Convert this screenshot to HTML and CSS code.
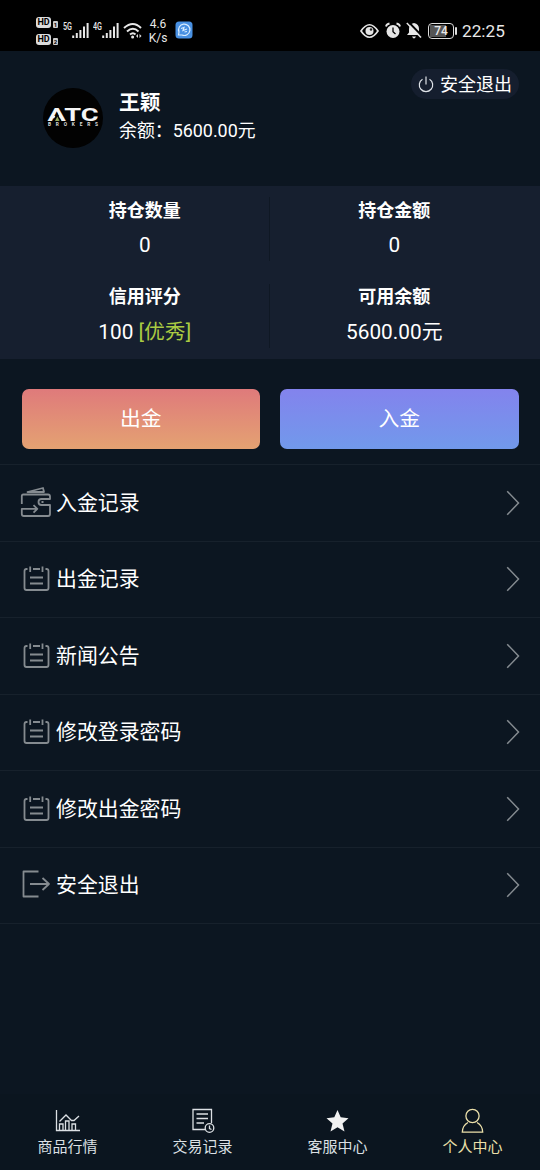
FILE: index.html
```html
<!DOCTYPE html>
<html lang="zh-CN">
<head>
<meta charset="utf-8">
<title>个人中心</title>
<link rel="stylesheet" href="styles.css">
</head>
<body>
<svg class="defs" width="0" height="0">
  <symbol id="note" viewBox="0 0 30 30"><path d="M6.500 5H5.500Q3.500 5 3.500 7V24Q3.500 26 5.500 26H25.500Q27.500 26 27.500 24V7Q27.500 5 25.500 5H24.500M12 5H19M9.200 2.500V8M21.500 2.500V8M9 13.500H22M9 19.500H22"/></symbol>
  <symbol id="chevron" viewBox="0 0 14 26"><path d="M1.200 1.200L12.500 13L1.200 24.800"/></symbol>
  <symbol id="signal" viewBox="0 0 17 16"><path d="M1.200 13.500V16M4.800 11V16M8.400 8V16M12 4.500V16M15.600 1V16"/></symbol>
</svg>
<div class="screen">
  <div class="status">
    <div class="sims">
      <div class="sim"><b>HD</b><i>1</i></div>
      <div class="sim"><b>HD</b><i>2</i></div>
    </div>
    <div class="cell"><small>5G</small><svg class="signal"><use href="#signal"/></svg></div>
    <div class="cell cell-4g"><small>4G</small><svg class="signal"><use href="#signal"/></svg></div>
    <svg class="wifi" viewBox="0 0 20 17"><path d="M1 6Q10-2 18 6M4 9.500Q10 4 15.500 9.500M7 12.500Q10 10 12.500 12.500" fill="none" stroke="#e8e8e8" stroke-width="2"/><circle cx="9.600" cy="15" r="1.500" fill="#e8e8e8"/><path d="M15 12L13 14L15 16ZM16.500 12L18.500 14L16.500 16Z" fill="#ddd"/></svg>
    <div class="speed"><span>4.6</span><span>K/s</span></div>
    <svg class="app" viewBox="0 0 18 18"><rect x=".5" y=".5" width="17" height="17" rx="3.500" fill="#4890e2"/><path d="M3.500 14L4 11A5.700 5.700 0 1 1 7 14Z" fill="none" stroke="#d9edff" stroke-width="1.200"/><path d="M6 7.500L9 6.500L8 9.500L12 8M9.500 11L12 10.500" fill="none" stroke="#d9edff" stroke-width="1.200"/></svg>
    <svg class="eye" viewBox="0 0 19 16"><path d="M1 8Q9.500-4.500 18 8Q9.500 20.500 1 8Z" fill="none" stroke="#e6e6e6" stroke-width="1.700"/><circle cx="9.500" cy="8" r="4" fill="#e6e6e6"/><circle cx="11" cy="6.500" r="1.200" fill="#222"/></svg>
    <svg class="alarm" viewBox="0 0 16 17"><circle cx="8" cy="9.500" r="6.500" fill="#e6e6e6"/><path d="M1 4.500Q1.500 2 4.500 1.500M15 4.500Q14.500 2 11.500 1.500" fill="none" stroke="#e6e6e6" stroke-width="1.800"/><path d="M8 5.500V9.800L10.500 12" fill="none" stroke="#000" stroke-width="1.300"/></svg>
    <svg class="mute" viewBox="0 0 16 17"><path d="M8 1Q13 2 13 7V10.500L15 13H1L3 10.500V7Q3 2 8 1ZM6 14.500H10Q9 16.500 8 16.500T6 14.500Z" fill="#e6e6e6"/><path d="M2.500 0L16 14" stroke="#000" stroke-width="2"/><path d="M.8 1L15 15.500" stroke="#e6e6e6" stroke-width="1.500"/></svg>
    <div class="battery"><span>74</span></div>
    <div class="clock">22:25</div>
  </div>
  <header class="profile">
    <svg class="avatar" viewBox="0 0 60 60"><circle cx="30" cy="30" r="30" fill="#020202"/><text class="brand" x="4.500" y="32.800" textLength="51" lengthAdjust="spacingAndGlyphs">ATC</text><path d="M9.500 34L14 24.500L18.700 34Z" fill="#020202"/><path d="M12 33L14.300 28.500L16.600 33Z" fill="#95a958"/><text class="brand-sub" x="5" y="38.200" textLength="50">BROKERS</text></svg>
    <div class="who"><div class="name">王颖</div><div class="balance">余额：5600.00元</div></div>
    <div class="logout"><svg class="power" viewBox="0 0 16 17"><path d="M4.500 3.200A6.700 6.700 0 1 0 11.500 3.200M8 .5V8.500" fill="none" stroke="#dfe3e8" stroke-width="1.200"/></svg><span>安全退出</span></div>
  </header>
  <section class="stats">
    <div class="stat"><strong>持仓数量</strong><span>0</span></div>
    <div class="stat"><strong>持仓金额</strong><span>0</span></div>
    <div class="stat"><strong>信用评分</strong><span>100 <em>[优秀]</em></span></div>
    <div class="stat"><strong>可用余额</strong><span>5600.00元</span></div>
  </section>
  <div class="actions"><div class="btn out">出金</div><div class="btn in">入金</div></div>
  <nav class="menu">
    <div class="row"><svg class="icon" viewBox="0 0 30 30"><path d="M.8 16V8Q.8 6.500 2.300 6.500H27Q29 6.500 29 8.500V11H20.500A3 3 0 0 0 20.500 17H29V26Q29 28 27 28H2.800Q.8 28 .8 26V20.800H16M12.500 17.200L16.300 20.800L12.500 24.600M6.500 4L22 0L23 4ZM20.500 14H22.500"/></svg><span>入金记录</span><svg class="chevron"><use href="#chevron"/></svg></div>
    <div class="row"><svg class="icon"><use href="#note"/></svg><span>出金记录</span><svg class="chevron"><use href="#chevron"/></svg></div>
    <div class="row"><svg class="icon"><use href="#note"/></svg><span>新闻公告</span><svg class="chevron"><use href="#chevron"/></svg></div>
    <div class="row"><svg class="icon"><use href="#note"/></svg><span>修改登录密码</span><svg class="chevron"><use href="#chevron"/></svg></div>
    <div class="row"><svg class="icon"><use href="#note"/></svg><span>修改出金密码</span><svg class="chevron"><use href="#chevron"/></svg></div>
    <div class="row"><svg class="icon" viewBox="0 0 30 30"><path d="M17.500 1.500H2.500V26.500H17.500M9 14H28M21.500 8L28 14L21.500 20"/></svg><span>安全退出</span><svg class="chevron"><use href="#chevron"/></svg></div>
  </nav>
  <footer class="tabs">
    <div class="tab"><svg viewBox="0 0 26 26"><path d="M1.500 2V22.500H25M4.500 22V16H8V22M10.500 22V13H14V22M17 22V16H20.500V22M4.500 13.500L11 7L16.500 12.500H19L24 8"/></svg><span>商品行情</span></div>
    <div class="tab"><svg viewBox="0 0 26 26"><path d="M15 21.500H3V1.500H21.500V15M6.500 6H18M6.500 10.500H18M6.500 15H14"/><circle cx="19.500" cy="20" r="4.300"/><path d="M19.500 17.500V20.500L21.500 21.500"/></svg><span>交易记录</span></div>
    <div class="tab"><svg viewBox="0 0 26 26"><path class="star" d="M12.500 2L15.700 9.300L23.500 10.200L17.500 15.400L19.500 23.500L12.500 19.300L5.500 23.500L7.500 15.400L1.500 10.200L9.300 9.300Z"/></svg><span>客服中心</span></div>
    <div class="tab active"><svg viewBox="0 0 26 26"><circle cx="12.500" cy="8" r="6.600"/><path d="M8 14.500Q2.500 17.500 2.300 24.200H22.700Q22.500 17.500 17 14.500"/></svg><span>个人中心</span></div>
  </footer>
</div>
</body>
</html>
```
FILE: styles.css
```css
* { box-sizing: border-box; }
body { margin: 0; background: #0c1621; color: #fff; font-family: Roboto, "Noto Sans CJK SC", sans-serif; }
.defs { display: block; }
svg { flex: none; display: block; }
.screen { width: 540px; height: 1170px; display: flex; flex-direction: column; overflow: hidden; }
.status { height: 51px; flex: none; background: #000; display: flex; align-items: flex-start; color: #e8e8e8; padding-left: 36px; }
.sims { width: 27px; padding-top: 17px; display: flex; flex-direction: column; gap: 6px; }
.sim { display: flex; align-items: flex-end; gap: 2px; height: 11px; }
.sim b { width: 15px; height: 11px; border-radius: 3px; background: #ddd; color: #000; font-size: 9px; line-height: 11px; text-align: center; }
.sim i { width: 5px; height: 7px; border-radius: 1px; background: #ccc; color: #000; font: bold 6px/7px Roboto, sans-serif; text-align: center; }
.cell { width: 30px; padding-top: 22px; display: flex; align-items: flex-start; }
.cell small { width: 9px; font-size: 10px; line-height: 10px; transform: scaleX(.72); transform-origin: left; font-weight: 500; }
.signal { width: 17px; height: 16px; stroke: #e8e8e8; stroke-width: 2; }
.cell-4g { width: 31px; }
.wifi { width: 20px; height: 17px; margin: 22px 0 0 -1px; }
.speed { width: 30px; margin: 17px 3px 0 0; display: flex; flex-direction: column; align-items: center; font-size: 12px; line-height: 14px; }
.app { width: 18px; height: 18px; margin: 21px 167px 0 -1px; }
.eye { width: 19px; height: 16px; margin: 23px 6px 0 0; }
.alarm { width: 16px; height: 17px; margin: 22px 5px 0 0; }
.mute { width: 16px; height: 17px; margin: 22px 6px 0 0; }
.battery { width: 26px; height: 16px; margin: 23px 0 0 0; border: 1.5px solid #ddd; border-radius: 4px; padding: 1px; position: relative; }
.battery::after { content: ""; position: absolute; right: -4px; top: 3px; width: 2px; height: 8px; background: #ddd; border-radius: 1px; }
.battery span { display: block; height: 12px; background: linear-gradient(90deg, #555 74%, #000 74%); font-size: 12px; line-height: 13px; text-align: center; font-weight: 500; }
.clock { margin: 20px 0 0 8px; font-size: 17.200px; line-height: 22px; }
.profile { height: 135px; flex: none; padding: 37px 21px 0 43px; display: flex; align-items: flex-start; }
.avatar { width: 60px; height: 60px; margin-right: 16px; }
.who { padding-top: 1px; }
.brand { font: 700 17.500px Roboto, sans-serif; fill: #f5f5f5; }
.brand-sub { font: bold 4.800px Roboto, sans-serif; fill: #ddd; }
.name { font-size: 20.800px; line-height: 28px; font-weight: 700; }
.balance { font-size: 17.900px; line-height: 28px; }
.logout { width: 108px; height: 30px; margin: -19px 0 0 auto; border-radius: 15px; background: #151e2e; display: flex; align-items: center; padding-left: 7px; gap: 6px; font-size: 18px; line-height: 30px; white-space: nowrap; }
.logout span { padding-top: 1px; }
.power { width: 16px; height: 17px; }
.stats { height: 172.500px; flex: none; background: #161f2f; display: grid; grid-template-columns: 269.500px 1fr; grid-template-rows: 86.500px 86px; }
.stat { display: flex; flex-direction: column; align-items: center; padding: 9px 0 0 20px; position: relative; }
.stat:nth-child(even) { padding-left: 0; padding-right: 21px; }
.stat:nth-child(odd)::after { content: ""; position: absolute; right: 0; top: 11px; height: 64px; width: 1px; background: #0f1824; }
.stat strong { font-size: 18px; line-height: 30px; font-weight: 700; }
.stat:nth-child(-n+2) strong { padding-top: 1px; margin-bottom: -1px; }
.stat span { font-size: 20.800px; line-height: 30px; margin-top: 5px; }
.stat em { font-style: normal; color: #aacb42; }
.actions { flex: none; padding: 30.500px 21.500px 15px; display: flex; gap: 20px; }
.btn { flex: 1; height: 60px; border-radius: 7px; font-size: 20.800px; line-height: 60px; text-align: center; }
.out { background: linear-gradient(#df7a7b, #e4a272); }
.in { background: linear-gradient(#8383ed, #7199eb); }
.menu { flex: none; border-top: 1px solid #17212c; }
.row { height: 76.500px; border-bottom: 1px solid #17212c; padding: 0 20px 0 21px; display: flex; align-items: center; font-size: 20.900px; line-height: 30px; }
.row span { margin: 0 auto 0 5px; }
.icon { width: 30px; height: 30px; overflow: visible; fill: none; stroke: #858b90; stroke-width: 1.800; stroke-linejoin: round; }
.chevron { width: 14px; height: 26px; fill: none; stroke: #858b90; stroke-width: 1.500; }
.tabs { margin-top: auto; height: 76px; flex: none; display: grid; grid-template-columns: repeat(4, 1fr); padding-top: 14px; background: #0b151f; }
.tab { display: flex; flex-direction: column; align-items: center; color: #dce0e4; font-size: 15px; line-height: 22px; }
.tab svg { width: 26px; height: 26px; fill: none; stroke: currentColor; stroke-width: 1.300; margin-bottom: 2px; }
.tab .star { fill: #f1f1f1; stroke: none; }
.active { color: #ece0aa; }
```
